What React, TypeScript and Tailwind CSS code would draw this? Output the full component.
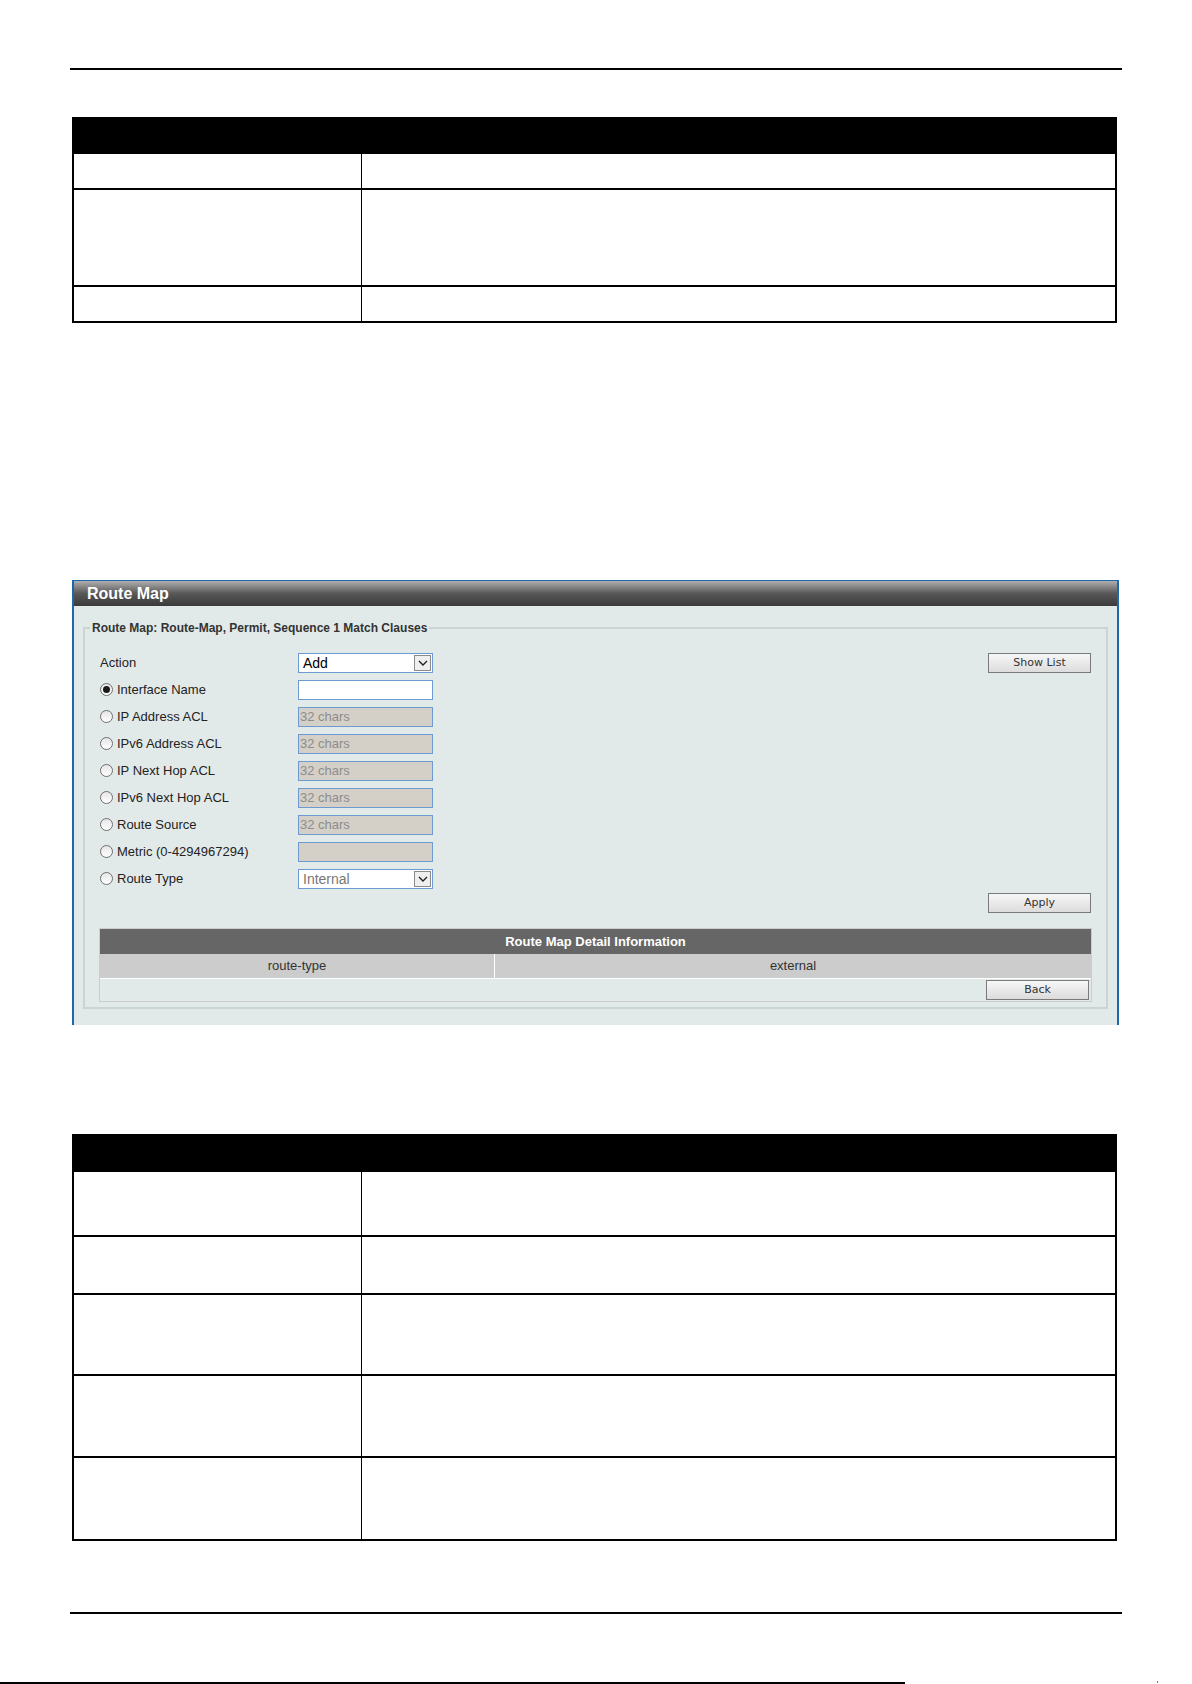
import React from 'react';

const rule = 'h-[2px] bg-black';

type Row = { h: string };

// blank parameter tables, header bar in black
function ParamTable({ head, rows }: { head: string; rows: Row[] }) {
  return (
    <div className="ml-[2px] w-[1045px] border-2 border-black">
      <div className={`${head} bg-black`} />
      {rows.map((r, i) => (
        <div key={i} className={`flex ${r.h} border-t-2 border-black`}>
          <div className="w-[288px] border-r border-black" />
          <div className="flex-1" />
        </div>
      ))}
    </div>
  );
}

function Radio({ checked }: { checked?: boolean }) {
  return (
    <span className="mr-[4px] flex h-[13px] w-[13px] items-center justify-center rounded-full border border-[#6f6f6f] bg-gradient-to-b from-[#e6e6e6] to-white">
      {checked && <span className="h-[7px] w-[7px] rounded-full bg-[#1a1a1a]" />}
    </span>
  );
}

function Chevron() {
  return (
    <span className="flex h-[16px] w-[17px] items-center justify-center border border-[#8a8a8a] bg-[#efefef]">
      <svg width="10" height="6" viewBox="0 0 10 6">
        <path d="M1 1 L5 5 L9 1" fill="none" stroke="#222" strokeWidth="1.4" />
      </svg>
    </span>
  );
}

function Select({ value, muted }: { value: string; muted?: boolean }) {
  return (
    <div className="flex h-[20px] w-[135px] items-center justify-between border border-[#6b9bd1] bg-white pl-[4px] pr-[1px]">
      <span className={`text-[14px] leading-none ${muted ? 'text-[#777]' : 'text-black'}`}>{value}</span>
      <Chevron />
    </div>
  );
}

function TextBox({ placeholder, disabled }: { placeholder?: string; disabled?: boolean }) {
  return (
    <div
      className={`flex h-[20px] w-[135px] items-center border border-[#6b9bd1] pl-[1px] text-[13px] text-[#8c8c8c] ${
        disabled ? 'bg-[#d4d0c8]' : 'bg-white'
      }`}
    >
      {placeholder}
    </div>
  );
}

function Btn({ label }: { label: string }) {
  return (
    <button className="h-[20px] w-[103px] border border-[#7a7a7a] bg-gradient-to-b from-[#f7f7f7] to-[#dcdcdc] font-['DejaVu_Sans',sans-serif] text-[11px] text-[#333]">
      {label}
    </button>
  );
}

const fields = [
  { label: 'Interface Name', checked: true, ctrl: <TextBox /> },
  { label: 'IP Address ACL', ctrl: <TextBox placeholder="32 chars" disabled /> },
  { label: 'IPv6 Address ACL', ctrl: <TextBox placeholder="32 chars" disabled /> },
  { label: 'IP Next Hop ACL', ctrl: <TextBox placeholder="32 chars" disabled /> },
  { label: 'IPv6 Next Hop ACL', ctrl: <TextBox placeholder="32 chars" disabled /> },
  { label: 'Route Source', ctrl: <TextBox placeholder="32 chars" disabled /> },
  { label: 'Metric (0-4294967294)', ctrl: <TextBox disabled /> },
  { label: 'Route Type', ctrl: <Select value="Internal" muted /> },
];

function RouteMapPanel() {
  return (
    <div className="ml-[2px] h-[445px] w-[1047px] border-x-2 border-t border-[#1d68a8] bg-[#e2eae9]">
      <div className="flex h-[25px] items-center bg-gradient-to-b from-[#b0b0b0] via-[#585858] to-[#3a3a3a] pl-[13px] text-[16px] font-bold text-white">
        Route Map
      </div>
      <fieldset className="mx-[9px] mt-[13px] border-2 border-[#ccd4d3] px-[14px] pb-[5px]">
        <legend className="-ml-[9px] px-[2px] text-[12px] font-bold text-[#333]">
          Route Map: Route-Map, Permit, Sequence 1 Match Clauses
        </legend>
        <div className="mt-[12px] text-[13px] text-[#222]">
          <div className="flex h-[27px] items-center">
            <span className="w-[199px] pl-[1px]">Action</span>
            <Select value="Add" />
            <div className="ml-auto mr-[1px]">
              <Btn label="Show List" />
            </div>
          </div>
          {fields.map((f) => (
            <div key={f.label} className="flex h-[27px] items-center">
              <span className="flex w-[199px] items-center pl-[1px]">
                <Radio checked={f.checked} />
                {f.label}
              </span>
              {f.ctrl}
            </div>
          ))}
          <div className="mt-[1px] flex justify-end pr-[1px]">
            <Btn label="Apply" />
          </div>
        </div>
        <div className="mt-[15px] border border-[#cccccc] font-['Liberation_Sans_Narrow','Liberation_Sans',sans-serif] text-[13px]">
          <div className="flex h-[25px] items-center justify-center bg-[#666666] font-bold text-white">
            Route Map Detail Information
          </div>
          <div className="flex h-[24px] bg-[#cccccc] text-[#333]">
            <div className="flex w-[395px] items-center justify-center border-r border-white">route-type</div>
            <div className="flex flex-1 items-center justify-center">external</div>
          </div>
          <div className="flex h-[23px] items-center justify-end border-t border-white pr-[2px]">
            <Btn label="Back" />
          </div>
        </div>
      </fieldset>
    </div>
  );
}

export default function App() {
  return (
    <div className="relative h-[1684px] w-[1192px] overflow-hidden bg-white font-['Liberation_Sans',Arial,sans-serif]">
      <div className="ml-[70px] w-[1052px] pt-[68px]">
        <div className={rule} />
        <div className="mt-[47px]">
          <ParamTable head="h-[33px]" rows={[{ h: 'h-[36px]' }, { h: 'h-[97px]' }, { h: 'h-[36px]' }]} />
        </div>
        <div className="mt-[257px]">
          <RouteMapPanel />
        </div>
        <div className="mt-[109px]">
          <ParamTable
            head="h-[34px]"
            rows={[{ h: 'h-[65px]' }, { h: 'h-[58px]' }, { h: 'h-[81px]' }, { h: 'h-[82px]' }, { h: 'h-[83px]' }]}
          />
        </div>
        <div className="mt-[71px] h-[2px] bg-black" />
      </div>
      {/* footer rule along the page edge */}
      <div className="absolute bottom-0 left-0 h-[2px] w-[905px] bg-black" />
      <div className="absolute bottom-[1px] left-[1157px] h-[2px] w-[1px] bg-[#b06060]" />
    </div>
  );
}
